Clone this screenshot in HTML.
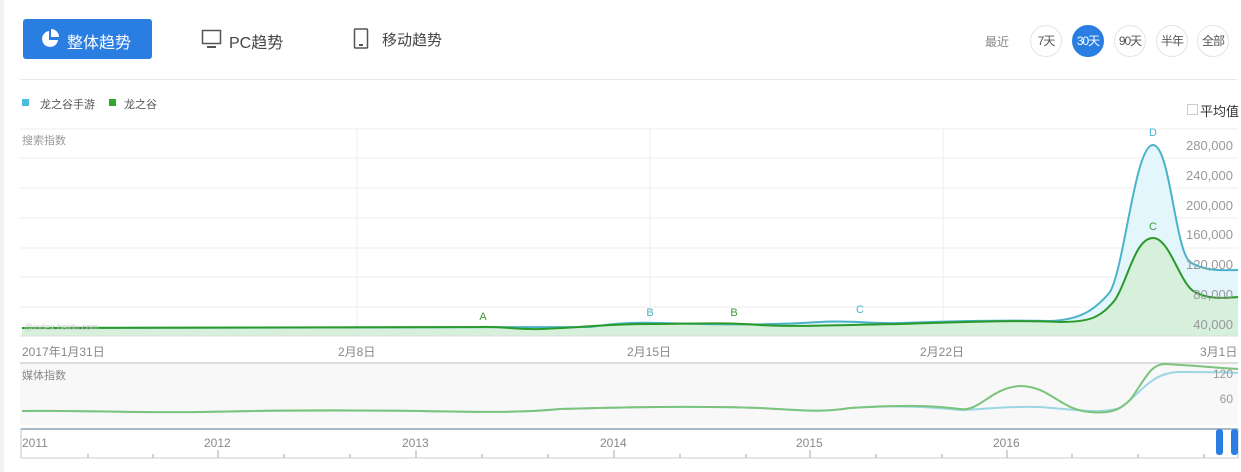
<!DOCTYPE html>
<html><head><meta charset="utf-8"><style>
body{margin:0;width:1241px;height:472px;background:#fff;font-family:"Liberation Sans","Noto Sans CJK SC",sans-serif;position:relative;overflow:hidden}
.a{position:absolute;white-space:nowrap}
.btn{left:23px;top:19px;width:129px;height:40px;background:#2a7de1;border-radius:3px;color:#fff;font-size:16px}
.circ{width:30px;height:30px;border-radius:50%;border:1px solid #e4e4e4;font-size:12px;color:#555;text-align:center;line-height:30px;top:25px;letter-spacing:-1px}
.yl{font-size:13px;color:#999;right:8px;text-align:right}
.dl{font-size:12px;color:#888;top:343px}
</style></head><body>
<div class="a" style="left:0;top:0;width:4px;height:472px;background:#f3f3f3"></div>
<div class="a btn"><svg class="a" style="left:17px;top:10px" width="20" height="20" viewBox="0 0 20 20"><path d="M9 2A8 8 0 1 0 18 11H9Z" fill="#fff"/><path d="M11 0A8 8 0 0 1 19 8H11Z" fill="#fff"/></svg><span class="a" style="left:44px;top:10px">整体趋势</span></div>
<svg class="a" style="left:201px;top:29px" width="22" height="20"><rect x="1.5" y="1.5" width="18" height="13" fill="none" stroke="#555" stroke-width="1.5"/><rect x="6" y="17" width="9" height="2" fill="#555"/></svg>
<div class="a" style="left:229px;top:29px;font-size:16px;color:#444">PC趋势</div>
<svg class="a" style="left:353px;top:28px" width="16" height="22"><rect x="1.5" y="1" width="13" height="19" rx="1" fill="none" stroke="#555" stroke-width="1.5"/><rect x="6" y="16" width="4" height="2" fill="#555"/></svg>
<div class="a" style="left:382px;top:29px;font-size:15px;color:#444">移动趋势</div>
<div class="a" style="left:985px;top:33px;font-size:12px;color:#888">最近</div>
<div class="a circ" style="left:1030px">7天</div>
<div class="a circ" style="left:1072px;background:#2a7de1;border-color:#2a7de1;color:#fff">30天</div>
<div class="a circ" style="left:1114px">90天</div>
<div class="a circ" style="left:1156px">半年</div>
<div class="a circ" style="left:1197px">全部</div>
<div class="a" style="left:20px;top:79px;width:1217px;height:1px;background:#e8e8e8"></div>
<div class="a" style="left:22px;top:99px;width:7px;height:7px;background:#4bbbe0"></div>
<div class="a" style="left:40px;top:96px;font-size:11px;color:#555">龙之谷手游</div>
<div class="a" style="left:109px;top:99px;width:7px;height:7px;background:#2daa2d"></div>
<div class="a" style="left:124px;top:96px;font-size:11px;color:#555">龙之谷</div>
<div class="a" style="left:1187px;top:104px;width:9px;height:9px;border:1px solid #ccc"></div>
<div class="a" style="left:1200px;top:101px;font-size:13px;color:#333">平均值</div>
<div class="a" style="left:22px;top:132px;font-size:11px;color:#999">搜索指数</div>
<svg class="a" style="left:0;top:0" width="1241" height="472">
<g stroke="#eee" stroke-width="1">
<line x1="20" y1="129" x2="1238" y2="129"/><line x1="20" y1="158" x2="1238" y2="158"/><line x1="20" y1="188" x2="1238" y2="188"/><line x1="20" y1="218" x2="1238" y2="218"/><line x1="20" y1="248" x2="1238" y2="248"/><line x1="20" y1="277" x2="1238" y2="277"/><line x1="20" y1="307" x2="1238" y2="307"/>
<line x1="357" y1="129" x2="357" y2="336"/><line x1="650" y1="129" x2="650" y2="336"/><line x1="943" y1="129" x2="943" y2="336"/>
</g>
<path d="M22 328 L590 327 C610 324 630 322 660 323 C700 324 760 326 820 322 C850 320 870 324 900 323 C960 321 1000 320 1050 321 C1080 320 1095 310 1110 292 C1125 265 1135 145 1153 145 C1170 145 1175 250 1190 262 C1205 272 1225 270 1238 270 L1238 336 L22 336Z" fill="#e3f6fb"/>
<path d="M22 328 L480 327 C500 326 520 330 540 329 C580 328 600 324 650 324 C690 324 720 322 760 325 C800 327 840 325 900 324 C960 322 1020 320 1060 322 C1090 322 1100 318 1115 300 C1128 280 1135 238 1153 238 C1170 238 1180 285 1195 292 C1210 300 1225 298 1238 297 L1238 336 L22 336Z" fill="#d6f0dc"/>
<path d="M22 328 L590 327 C610 324 630 322 660 323 C700 324 760 326 820 322 C850 320 870 324 900 323 C960 321 1000 320 1050 321 C1080 320 1095 310 1110 292 C1125 265 1135 145 1153 145 C1170 145 1175 250 1190 262 C1205 272 1225 270 1238 270" fill="none" stroke="#4ab3c9" stroke-width="2"/>
<path d="M22 328 L480 327 C500 326 520 330 540 329 C580 328 600 324 650 324 C690 324 720 322 760 325 C800 327 840 325 900 324 C960 322 1020 320 1060 322 C1090 322 1100 318 1115 300 C1128 280 1135 238 1153 238 C1170 238 1180 285 1195 292 C1210 300 1225 298 1238 297" fill="none" stroke="#2a9a2a" stroke-width="2"/>
<line x1="20" y1="336" x2="1238" y2="336" stroke="#ddd"/>
<g font-size="11" text-anchor="middle" font-family="Liberation Sans"><text x="483" y="320" fill="#3a9a3a">A</text><text x="650" y="316" fill="#4ab3c9">B</text><text x="734" y="316" fill="#3a9a3a">B</text><text x="860" y="313" fill="#4ab3c9">C</text><text x="1153" y="136" fill="#4ab3c9">D</text><text x="1153" y="230" fill="#3a9a3a">C</text></g>
<rect x="20" y="363" width="1218" height="62" fill="#f8f8f8"/>
<line x1="20" y1="363" x2="1238" y2="363" stroke="#ddd" stroke-width="2"/>
<path d="M22 411 C80 410 120 413 200 412 C280 410 340 410 420 411 C480 412 520 413 560 409 C620 407 700 406 760 408 C800 410 820 413 850 408 C900 405 930 407 960 410 C980 410 1000 406 1040 407 C1080 410 1100 414 1120 408 C1140 395 1150 372 1180 372 C1210 372 1230 372 1238 373" fill="none" stroke="#9dd6e4" stroke-width="2"/>
<path d="M22 411 C80 410 120 413 200 412 C280 410 340 410 420 411 C480 412 520 413 560 409 C620 407 700 406 760 408 C800 410 820 413 850 408 C900 405 930 405 960 409 C980 412 990 388 1020 386 C1050 386 1060 410 1090 412 C1110 414 1120 410 1130 400 C1145 380 1150 364 1165 364 C1200 366 1220 368 1238 369" fill="none" stroke="#7cc47c" stroke-width="2"/>
<rect x="21" y="429" width="1217" height="29" fill="#fff" stroke="#b8c4cc"/>
<line x1="21" y1="429" x2="1238" y2="429" stroke="#a8b8c4" stroke-width="2"/>
<line x1="21" y1="458" x2="1238" y2="458" stroke="#ccc"/>
<g stroke="#aaa"><line x1="88" y1="454" x2="88" y2="458"/><line x1="153" y1="454" x2="153" y2="458"/><line x1="218" y1="450" x2="218" y2="458"/><line x1="284" y1="454" x2="284" y2="458"/><line x1="350" y1="454" x2="350" y2="458"/><line x1="416" y1="450" x2="416" y2="458"/><line x1="482" y1="454" x2="482" y2="458"/><line x1="548" y1="454" x2="548" y2="458"/><line x1="614" y1="450" x2="614" y2="458"/><line x1="680" y1="454" x2="680" y2="458"/><line x1="746" y1="454" x2="746" y2="458"/><line x1="810" y1="450" x2="810" y2="458"/><line x1="876" y1="454" x2="876" y2="458"/><line x1="942" y1="454" x2="942" y2="458"/><line x1="1007" y1="450" x2="1007" y2="458"/><line x1="1072" y1="454" x2="1072" y2="458"/><line x1="1138" y1="454" x2="1138" y2="458"/><line x1="1204" y1="454" x2="1204" y2="458"/></g>
<g font-size="12" fill="#888" font-family="Liberation Sans"><text x="22" y="447">2011</text><text x="204" y="447">2012</text><text x="402" y="447">2013</text><text x="600" y="447">2014</text><text x="796" y="447">2015</text><text x="993" y="447">2016</text></g>
<rect x="1216" y="429" width="7" height="26" rx="3" fill="#2a7de1"/><rect x="1231" y="429" width="7" height="26" rx="3" fill="#2a7de1"/>
</svg>
<div class="a" style="left:24px;top:322px;font-size:9px;color:#ccc">@index.baidu.com</div>
<div class="a yl" style="top:138px">280,000</div>
<div class="a yl" style="top:168px">240,000</div>
<div class="a yl" style="top:198px">200,000</div>
<div class="a yl" style="top:227px">160,000</div>
<div class="a yl" style="top:257px">120,000</div>
<div class="a yl" style="top:287px">80,000</div>
<div class="a yl" style="top:317px">40,000</div>
<div class="a dl" style="left:22px">2017年1月31日</div>
<div class="a dl" style="left:338px">2月8日</div>
<div class="a dl" style="left:627px">2月15日</div>
<div class="a dl" style="left:920px">2月22日</div>
<div class="a dl" style="left:1200px">3月1日</div>
<div class="a" style="left:22px;top:367px;font-size:11px;color:#888">媒体指数</div>
<div class="a yl" style="top:367px;font-size:12px">120</div>
<div class="a yl" style="top:392px;font-size:12px">60</div>
</body></html>
